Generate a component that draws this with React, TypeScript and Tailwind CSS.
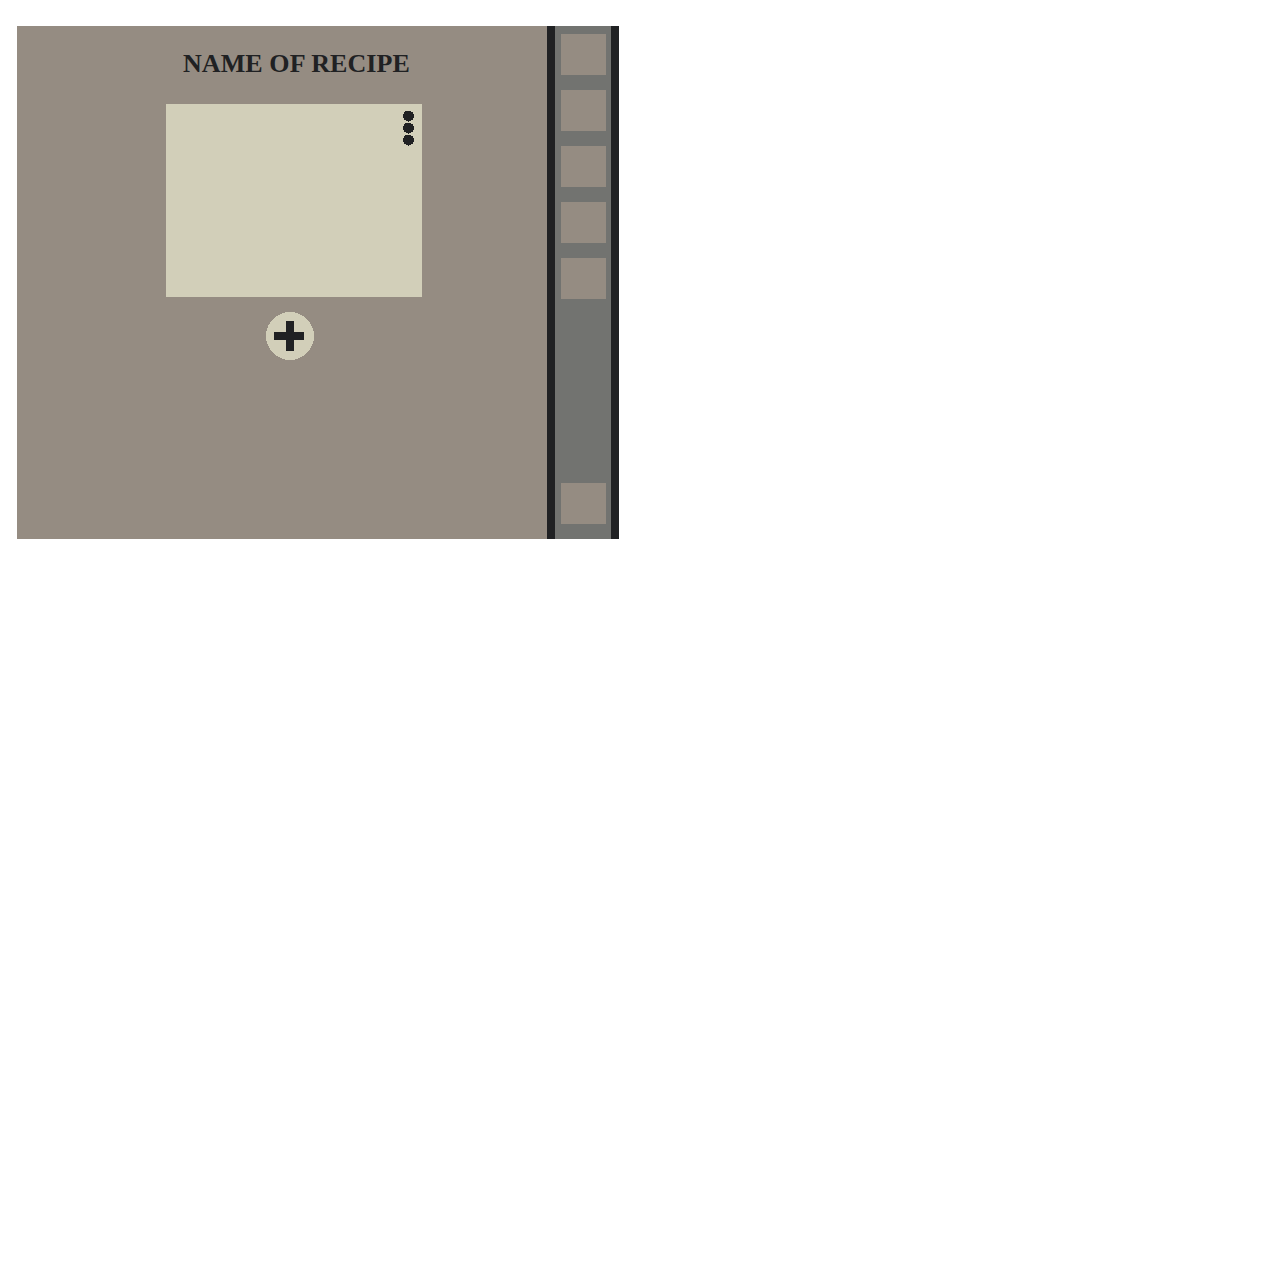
const slots = [0, 1, 2, 3, 4];

function Slot() {
  return <button className="block h-[41px] w-[45px] shrink-0 bg-[#958c82]" />;
}

function MoreIcon() {
  return (
    <svg width="11" height="36" viewBox="0 0 11 36" fill="#202123" shapeRendering="crispEdges">
      <circle cx="5.5" cy="6" r="5.5" />
      <circle cx="5.5" cy="18" r="5.5" />
      <circle cx="5.5" cy="30" r="5.5" />
    </svg>
  );
}

export default function App() {
  return (
    <div className="h-[1280px] bg-white pt-[26px] pl-[17px] font-['Liberation_Serif',serif]">
      <div className="flex h-[513px] w-[602px]">
        <main className="w-[530px] bg-[#958c82]">
          <h1 className="ml-[166px] pt-5 text-[26px] leading-9 font-bold tracking-[0.08px] whitespace-nowrap text-[#202123]">
            NAME OF RECIPE
          </h1>
          <section className="mt-[22px] ml-[149px] flex h-[193px] w-64 justify-end bg-[#d2cfb9] pt-[6px] pr-2">
            <MoreIcon />
          </section>
          <button className="mt-[15px] ml-[249px] block size-12">
            <svg width="48" height="48" viewBox="0 0 48 48" shapeRendering="crispEdges">
              <circle cx="24" cy="24" r="24" fill="#d2cfb9" />
              <path d="M20 9h8v11h10v8H28v11h-8V28H8v-8h12z" fill="#202123" />
            </svg>
          </button>
        </main>
        <aside className="flex w-[72px] flex-col justify-between border-x-8 border-[#202123] bg-[#727370] pt-2 pb-[15px] pl-[6px]">
          <div className="flex flex-col gap-[15px]">
            {slots.map((slot) => (
              <Slot key={slot} />
            ))}
          </div>
          <Slot />
        </aside>
      </div>
    </div>
  );
}
